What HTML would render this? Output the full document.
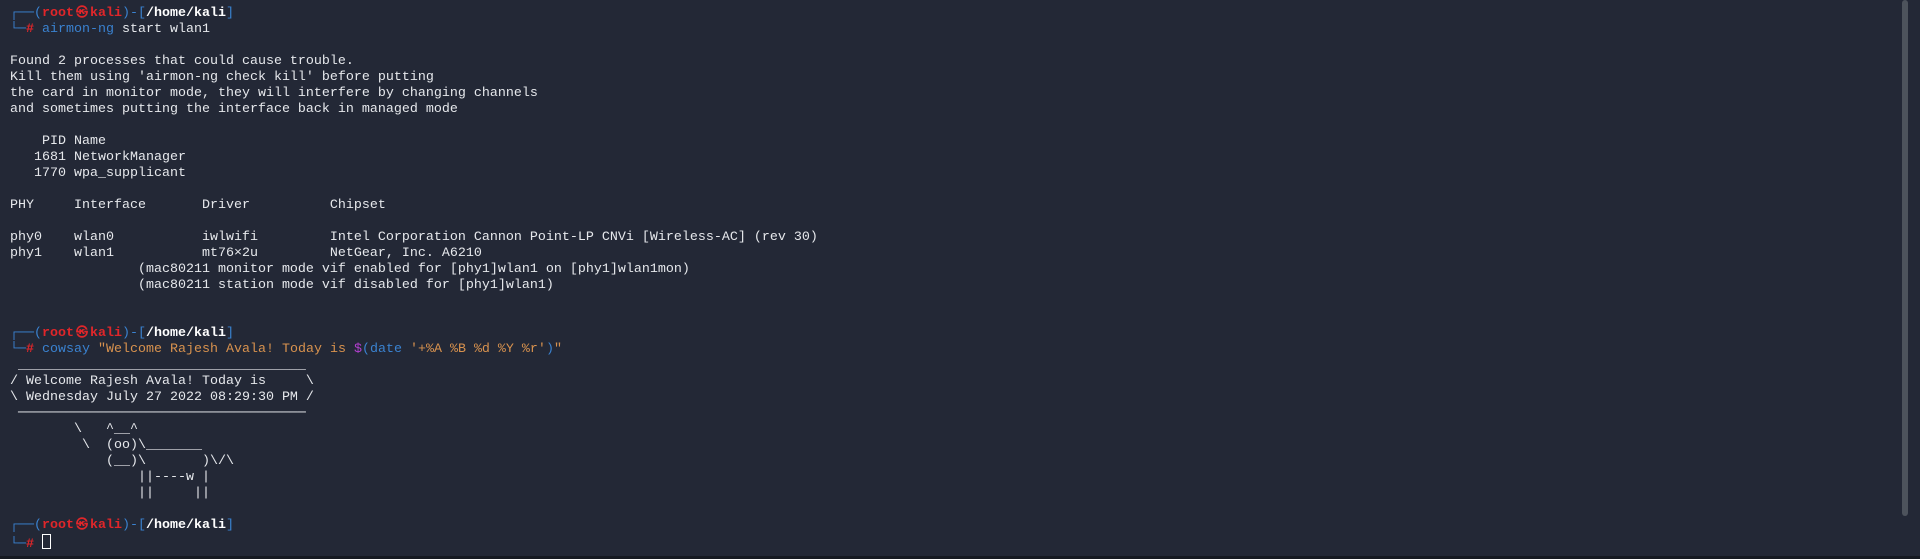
<!DOCTYPE html>
<html><head><meta charset="utf-8"><style>
html,body{margin:0;padding:0;width:1920px;height:559px;overflow:hidden;background:#232836;}
pre{margin:0;position:absolute;left:10px;top:6px;font-family:"Liberation Mono","DejaVu Sans Mono",monospace;font-size:13.33px;line-height:16px;color:#e6e8ec;}
.b{color:#3a82d0}.r{color:#e0262a;font-weight:bold}.w{color:#fff;font-weight:bold}.o{color:#d8924e}.p{color:#b33fd0}
.k{display:inline-block;width:16px;font-size:12px;line-height:12px;text-align:center;overflow:visible}
.cur{display:inline-block;width:7px;height:13px;border:1px solid #fff;vertical-align:-2px}
.sb{position:absolute;left:1902px;top:0;width:6px;height:516px;background:#4d535c;border-radius:3px}
.bot{position:absolute;left:0;top:556px;width:1920px;height:3px;background:#161a22}
</style></head><body>
<pre><span class="b">┌──(</span><span class="r">root<span class="k">㉿</span>kali</span><span class="b">)-[</span><span class="w">/home/kali</span><span class="b">]</span>
<span class="b">└─</span><span class="r">#</span> <span class="b">airmon-ng</span> start wlan1

Found 2 processes that could cause trouble.
Kill them using 'airmon-ng check kill' before putting
the card in monitor mode, they will interfere by changing channels
and sometimes putting the interface back in managed mode

    PID Name
   1681 NetworkManager
   1770 wpa_supplicant

PHY     Interface       Driver          Chipset

phy0    wlan0           iwlwifi         Intel Corporation Cannon Point-LP CNVi [Wireless-AC] (rev 30)
phy1    wlan1           mt76×2u         NetGear, Inc. A6210
                (mac80211 monitor mode vif enabled for [phy1]wlan1 on [phy1]wlan1mon)
                (mac80211 station mode vif disabled for [phy1]wlan1)


<span class="b">┌──(</span><span class="r">root<span class="k">㉿</span>kali</span><span class="b">)-[</span><span class="w">/home/kali</span><span class="b">]</span>
<span class="b">└─</span><span class="r">#</span> <span class="b">cowsay</span> <span class="o">"Welcome Rajesh Avala! Today is </span><span class="p">$</span><span class="b">(date</span> <span class="o">'+%A %B %d %Y %r'</span><span class="b">)</span><span class="o">"</span>
 ____________________________________
/ Welcome Rajesh Avala! Today is     \
\ Wednesday July 27 2022 08:29:30 PM /
 ────────────────────────────────────
        \   ^__^
         \  (oo)\_______
            (__)\       )\/\
                ||----w |
                ||     ||

<span class="b">┌──(</span><span class="r">root<span class="k">㉿</span>kali</span><span class="b">)-[</span><span class="w">/home/kali</span><span class="b">]</span>
<span class="b">└─</span><span class="r">#</span> <span class="cur"></span></pre>
<div class="sb"></div><div class="bot"></div>
</body></html>
